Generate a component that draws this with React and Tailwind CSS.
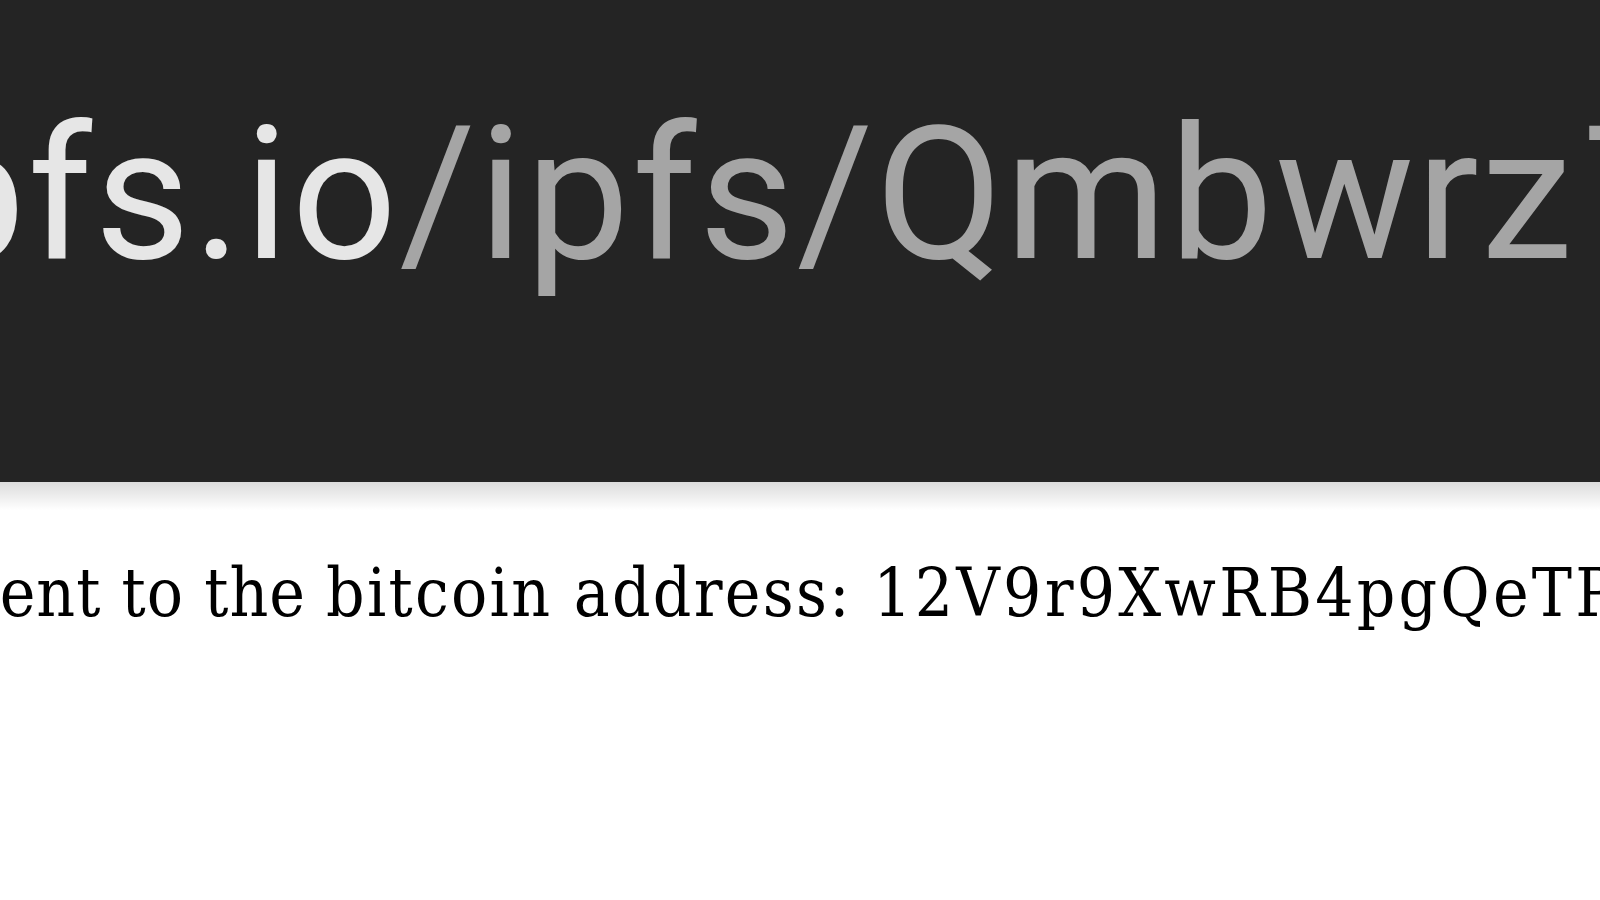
export default function App() {
  return (
    <div className="w-[1600px] h-[900px] bg-white overflow-hidden">
      <div className="h-[482px] bg-[#242424] overflow-hidden">
        <div className="pt-[102px] whitespace-nowrap text-[185px] leading-none font-['Roboto',sans-serif] -ml-[126px]">
          <span className="text-[#e6e6e6] tracking-[2.5px]">ipfs.io</span>
          <span className="text-[#a5a5a5] tracking-[2.5px]">/ipfs/</span>
          <span className="text-[#a5a5a5] tracking-[2px]">Qmbwrz</span>
          <span className="text-[#a5a5a5] ml-[10px]">T</span>
        </div>
      </div>
      <div className="h-7 bg-gradient-to-b from-[#dcdcdc] to-white" />
      <div className="mt-[50px] whitespace-nowrap text-[67px] leading-none text-black font-['DejaVu_Serif',serif] font-stretch-condensed -ml-[170px]">
        <span className="tracking-[1px]">payment to the </span>
        <span className="tracking-[2.3px]">bitcoin address: </span>
        <span className="tracking-[3.2px]">12V9r9XwRB4pgQeTPZ</span>
      </div>
    </div>
  );
}
